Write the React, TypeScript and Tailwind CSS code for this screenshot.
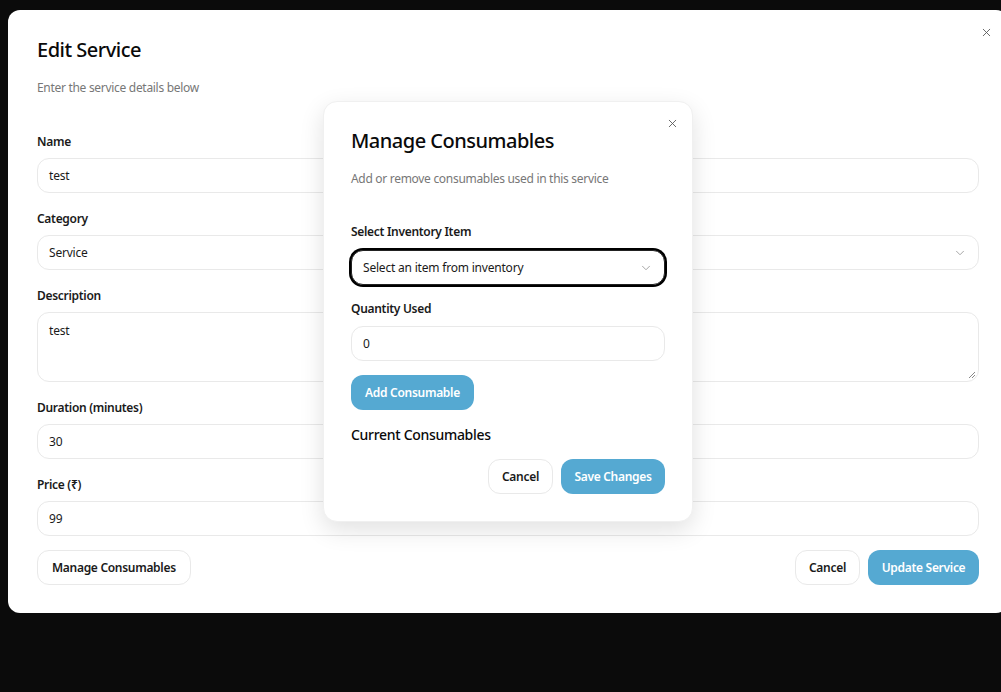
import React from "react";
import { ChevronDown, X } from "lucide-react";

const font = { fontFamily: '"Noto Sans", "Open Sans", sans-serif' };

function Field({ label, children }: { label: string; children: React.ReactNode }) {
  return (
    <div className="flex flex-col">
      <label className="text-[12px] leading-4 font-semibold tracking-[-0.3px] text-[#1a1a1a] mb-2">{label}</label>
      {children}
    </div>
  );
}

function Input({ value }: { value: string }) {
  return (
    <div className="h-[35px] rounded-xl border border-[#e9e9e9] bg-white px-[11px] pt-[1px] flex items-center text-[12px] tracking-[-0.2px] text-[#1a1a1a]">
      {value}
    </div>
  );
}

export default function App() {
  return (
    <div style={font} className="relative w-[1001px] h-[692px] overflow-hidden bg-[#0b0b0b]">
      {/* Outer dialog */}
      <div className="absolute left-[8px] top-[10px] w-[1000px] h-[603px] rounded-xl bg-white px-[29px] pt-[26px] pb-[28px] flex flex-col">
        <button className="absolute right-[13px] top-[14px] text-[#555] p-0.5">
          <X size={13} strokeWidth={1.6} />
        </button>
        <h2 className="text-[20px] leading-7 font-medium tracking-[-0.5px] text-[#0a0a0a]">Edit Service</h2>
        <p className="mt-4 text-[12px] leading-4 tracking-[-0.3px] text-[#777]">Enter the service details below</p>
        <div className="mt-[38px] flex flex-col gap-[18px]">
          <Field label="Name">
            <Input value="test" />
          </Field>
          <Field label="Category">
            <div className="h-[35px] rounded-xl border border-[#e9e9e9] bg-white px-[11px] pt-[1px] flex items-center justify-between text-[12px] tracking-[-0.2px] text-[#1a1a1a]">
              <span>Service</span>
              <ChevronDown size={14} strokeWidth={1.5} className="text-[#999]" />
            </div>
          </Field>
          <Field label="Description">
            <div className="relative h-[70px] rounded-xl border border-[#e9e9e9] bg-white px-[11px] pt-[9px] text-[12px] tracking-[-0.2px] text-[#1a1a1a]">
              test
              <svg className="absolute right-[2px] bottom-[2px]" width="8" height="8" viewBox="0 0 8 8">
                <path d="M7 1L1 7M7 4L4 7" stroke="#888" strokeWidth="1" />
              </svg>
            </div>
          </Field>
          <Field label="Duration (minutes)">
            <Input value="30" />
          </Field>
          <Field label="Price (₹)">
            <Input value="99" />
          </Field>
        </div>
        <div className="mt-[14px] flex items-center justify-between">
          <button className="h-[35px] px-[14px] rounded-xl border border-[#e9e9e9] bg-white text-[12px] font-semibold tracking-[-0.3px] text-[#1a1a1a]">
            Manage Consumables
          </button>
          <div className="flex gap-2">
            <button className="h-[35px] w-[65px] rounded-xl border border-[#e9e9e9] bg-white text-[12px] font-semibold tracking-[-0.3px] text-[#1a1a1a]">
              Cancel
            </button>
            <button className="h-[35px] w-[111px] rounded-xl bg-[#55a9d2] text-[12px] font-semibold tracking-[-0.3px] text-white">
              Update Service
            </button>
          </div>
        </div>
      </div>

      {/* Inner dialog */}
      <div className="absolute left-[323px] top-[101px] w-[370px] rounded-[14px] bg-white border border-[#f0f0f0] shadow-[0_8px_24px_rgba(0,0,0,0.12)] px-[27px] pt-[25px] pb-[27px] flex flex-col">
        <button className="absolute right-[11px] top-[13px] text-[#555] p-0.5">
          <X size={13} strokeWidth={1.6} />
        </button>
        <h2 className="text-[20px] leading-7 font-medium tracking-[-0.5px] text-[#0a0a0a]">Manage Consumables</h2>
        <p className="mt-4 text-[12px] leading-4 tracking-[-0.3px] text-[#777]">Add or remove consumables used in this service</p>
        <div className="mt-[37px] flex flex-col">
          <label className="text-[12px] leading-4 font-semibold tracking-[-0.3px] text-[#1a1a1a] mb-[10px]">Select Inventory Item</label>
          <div className="h-[35px] rounded-xl border border-[#222] ring-2 ring-black bg-white px-[11px] pt-[1px] flex items-center justify-between text-[12px] tracking-[-0.2px] text-[#1a1a1a]">
            <span>Select an item from inventory</span>
            <ChevronDown size={14} strokeWidth={1.5} className="text-[#999]" />
          </div>
        </div>
        <div className="mt-4 flex flex-col">
          <label className="text-[12px] leading-4 font-semibold tracking-[-0.3px] text-[#1a1a1a] mb-[9px]">Quantity Used</label>
          <Input value="0" />
        </div>
        <div className="mt-[14px]">
          <button className="h-[35px] w-[123px] rounded-xl bg-[#55a9d2] text-[12px] font-semibold tracking-[-0.3px] text-white">
            Add Consumable
          </button>
        </div>
        <h3 className="mt-[15px] text-[14px] leading-5 font-medium tracking-[-0.3px] text-[#0a0a0a]">Current Consumables</h3>
        <div className="mt-[14px] flex justify-end gap-2">
          <button className="h-[35px] w-[65px] rounded-xl border border-[#e9e9e9] bg-white text-[12px] font-semibold tracking-[-0.3px] text-[#1a1a1a]">
            Cancel
          </button>
          <button className="h-[35px] w-[104px] rounded-xl bg-[#55a9d2] text-[12px] font-semibold tracking-[-0.3px] text-white">
            Save Changes
          </button>
        </div>
      </div>
    </div>
  );
}
